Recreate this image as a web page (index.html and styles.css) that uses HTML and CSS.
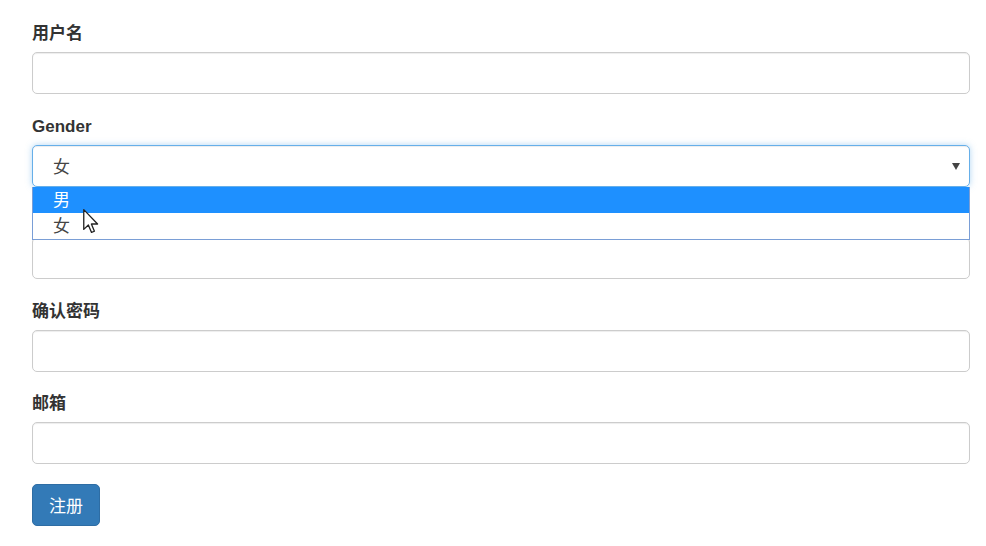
FILE: index.html
```html
<!DOCTYPE html>
<html lang="zh">
<head>
<meta charset="utf-8">
<title>注册</title>
<link rel="stylesheet" href="styles.css">
</head>
<body>
<form class="form">
  <div class="group">
    <label class="label">用户名</label>
    <div class="input"></div>
  </div>
  <div class="group">
    <label class="label">Gender</label>
    <div class="select-wrap">
      <div class="select focus">
        <span class="select-value">女</span>
        <span class="arrow"></span>
      </div>
      <ul class="dropdown">
        <li class="option active">男</li>
        <li class="option">女</li>
      </ul>
      <svg class="cursor" width="16" height="25" viewBox="0 0 12 19">
        <path d="M0.5 0.5 L0.5 15.5 L4 12.2 L6.4 17.8 L8.6 16.9 L6.3 11.4 L11 11.4 Z" fill="#fff" stroke="#222" stroke-width="1" stroke-linejoin="round"/>
      </svg>
    </div>
  </div>
  <div class="group">
    <label class="label covered">密码</label>
    <div class="input"></div>
  </div>
  <div class="group">
    <label class="label">确认密码</label>
    <div class="input"></div>
  </div>
  <div class="group">
    <label class="label">邮箱</label>
    <div class="input"></div>
  </div>
  <button type="button" class="btn">注册</button>
</form>
</body>
</html>
```
FILE: styles.css
```css
* { box-sizing: border-box; }
html, body { margin: 0; padding: 0; background: #fff; }
body {
  font-family: "Liberation Sans", "Noto Sans CJK SC", sans-serif;
  font-size: 17px;
  color: #333;
}
.form {
  width: 938px;
  margin-left: 32px;
  padding-top: 21px;
}
.group {
  display: flex;
  flex-direction: column;
  margin-bottom: 19.5px;
}
.label {
  font-weight: bold;
  line-height: 25px;
  height: 25px;
  margin-bottom: 6px;
  font-size: 17px;
}
.label.covered { visibility: hidden; }
.input {
  height: 42px;
  border: 1px solid #ccc;
  border-radius: 5px;
  background: #fff;
  box-shadow: inset 0 1px 1px rgba(0,0,0,.075);
}
.select-wrap { position: relative; }
.select {
  height: 42px;
  border: 1px solid #66afe9;
  border-radius: 5px;
  background: #fff;
  display: flex;
  align-items: center;
  justify-content: space-between;
  padding: 0 9px 0 20px;
}
.select.focus {
  box-shadow: inset 0 1px 1px rgba(0,0,0,.075), 0 0 6px rgba(102,175,233,.5);
}
.select-value { font-size: 17px; color: #444; }
.arrow {
  width: 0; height: 0;
  border-left: 4px solid transparent;
  border-right: 4px solid transparent;
  border-top: 7px solid #444;
  margin-top: 1px;
}
.dropdown {
  position: absolute;
  left: 0; right: 0;
  top: 42px;
  margin: 0; padding: 0;
  list-style: none;
  background: #fff;
  border: 1px solid #7a9ed6;
  border-top: none;
  z-index: 2;
}
.option {
  height: 26px;
  line-height: 27px;
  padding-left: 20px;
  font-size: 17px;
  color: #444;
}
.option.active { background: #1e90ff; color: #fff; }
.cursor {
  position: absolute;
  left: 51px;
  top: 64px;
  z-index: 3;
}
.btn {
  display: flex;
  align-items: center;
  justify-content: center;
  width: 68px;
  height: 42px;
  padding: 0;
  background: #337ab7;
  border: 1px solid #2e6da4;
  border-radius: 5px;
  color: #fff;
  font-family: "Liberation Sans", "Noto Sans CJK SC", sans-serif;
  font-size: 17px;
}
```
